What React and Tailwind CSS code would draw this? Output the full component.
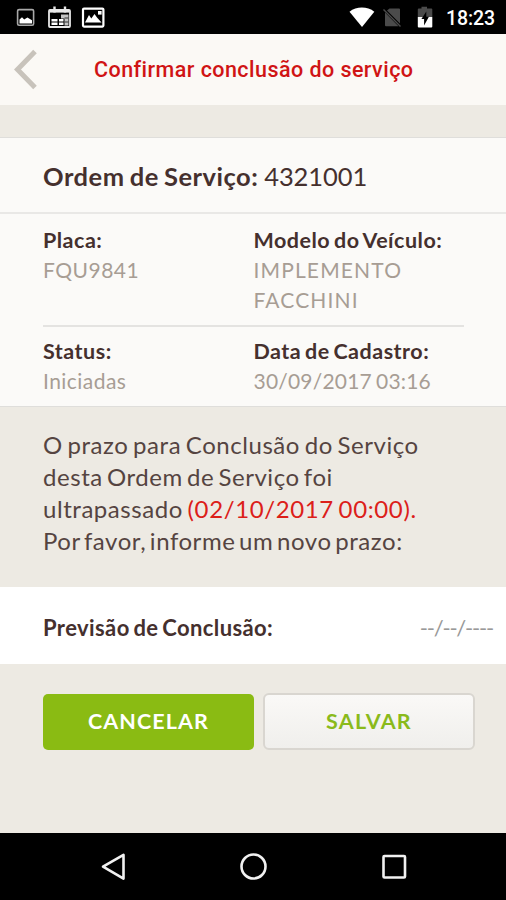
function StatusBar() {
  return (
    <div className="flex h-[34px] items-center bg-black">
      <svg width="506" height="34" viewBox="0 0 506 34" fill="none" aria-hidden="true">
        <rect x="17.6" y="9.6" width="16" height="15.6" rx="1.5" stroke="#a9a9a9" strokeWidth="1.6" />
        <path d="M19.5 23.5v-4l2.5-2.3 2.2 2.2 3.2-1.8 4.6 2.6v3.3z" fill="#fff" />

        <rect x="49" y="10" width="21" height="17" rx="1" stroke="#e8e8e8" strokeWidth="1.8" />
        <path d="M54.500 6.500v6M65 6.500v6" stroke="#e8e8e8" strokeWidth="2.400" />
        <path d="M49.500 11.500h20" stroke="#e8e8e8" strokeWidth="2.200" />
        <path d="M51.500 19h6v2.400h-6zM51.500 22.600h6v2.400h-6zM59 22.600h4.500v2.400H59zM59 19h4.500v2.400H59z" fill="#fff" />
        <path d="M61 14.500h7.500V25.500h-4v-7H61z" fill="#c4c4c4" />
        <path d="M64.500 18h4M64.500 22h4" stroke="#333" />

        <rect x="83" y="8.600" width="20.400" height="18" rx="1" stroke="#fff" strokeWidth="2.200" />
        <path d="M85 22.500l4-7.500 2.300 3.500 3.200-4.500 2.500 3.500 4.500 5z" fill="#fff" />
        <rect x="98" y="11" width="3.600" height="3.600" fill="#fff" />

        <path d="M349.500 11.700c7-5.500 17.800-5.500 24.800 0L362 27z" fill="#fff" />

        <path d="M389.500 8.500h9.500q1 0 1 1v14L387 10.500zM385 12.500l13.500 13.700h-12.500q-1 0-1-1z" fill="#4b4b4b" />
        <path d="M383.500 9.500l17 17" stroke="#4b4b4b" strokeWidth="1.500" />

        <path d="M417.800 17V9.500q0-1 1-1h2.700V6.800h5.500v1.700h4.300q1 0 1 1V17z" fill="#4b4b4b" />
        <path d="M417.800 17h14.500v9.500q0 1-1 1h-12.500q-1 0-1-1z" fill="#fff" />
        <path d="M426.300 11.500v5.300h2.600l-4.800 8.700v-6.500h-2.700z" fill="#000" />

        <text x="446" y="25" fill="#fff" fontFamily="Roboto, sans-serif" fontWeight="500" fontSize="19.500" textLength="49">
          18:23
        </text>
      </svg>
    </div>
  );
}

function Field({ label, value, valueClass }) {
  return (
    <div>
      <div className="text-[21.500px] leading-[30px] font-bold tracking-[0.500px] whitespace-nowrap text-[#45302e] [word-spacing:-2px]">
        {label}
      </div>
      <div className={`text-[21px] leading-[29.500px] whitespace-pre text-[#a79d94] ${valueClass}`}>{value}</div>
    </div>
  );
}

function NavBar() {
  return (
    <div className="flex h-[67px] items-start bg-black">
      <svg width="506" height="67" viewBox="0 833 506 67" fill="none" stroke="#f1f1f1" strokeWidth="2.600" aria-hidden="true">
        <path d="M103 866.700L123.500 854.800v23.800z" strokeLinejoin="round" />
        <circle cx="253.500" cy="866.500" r="12" />
        <rect x="383.500" y="856" width="21.500" height="21.500" rx="1" />
      </svg>
    </div>
  );
}

export default function App() {
  return (
    <div className="flex h-[900px] w-[506px] flex-col overflow-hidden bg-[#edeae3] font-['Lato','Open_Sans',sans-serif]">
      <StatusBar />

      <header className="flex h-[71px] items-center bg-[#fbf9f5] pl-[13px]">
        <svg width="26" height="42" viewBox="0 0 26 42" fill="none" aria-hidden="true">
          <path d="M22 2.500L4.500 20.500 22 38.500" stroke="#c8c3bb" strokeWidth="5" />
        </svg>
        <h1 className="ml-[55px] pt-px font-['Roboto',sans-serif] text-[21.500px] font-medium tracking-[0.450px] whitespace-nowrap text-[#d01414]">
          Confirmar conclusão do serviço
        </h1>
      </header>

      <section className="mt-[32px] h-[270px] border-y border-[#dfdedb] bg-[#fbfaf8]">
        <h2 className="flex h-[76px] items-center border-b-2 border-[#e9e8e6] pt-[3px] pl-[43px] text-[25.500px] tracking-[0.500px] whitespace-pre text-[#45302e] [word-spacing:-1.500px]">
          <span className="font-bold">Ordem de Serviço:</span>
          <span className="tracking-[-0.100px] [word-spacing:-0.500px]"> 4321001</span>
        </h2>
        <div className="ml-[43px] w-[421px]">
          <div className="grid h-[113px] grid-cols-2 border-b-2 border-[#e4e3e1] pt-[11px]">
            <Field label="Placa:" value="FQU9841" valueClass="tracking-[0.500px]" />
            <Field label="Modelo do Veículo:" value={"IMPLEMENTO\nFACCHINI"} valueClass="tracking-[1.150px]" />
          </div>
          <div className="grid grid-cols-2 pt-[9px]">
            <Field label="Status:" value="Iniciadas" valueClass="tracking-[0.450px]" />
            <Field label="Data de Cadastro:" value="30/09/2017 03:16" valueClass="tracking-[0.200px] [word-spacing:-1.500px]" />
          </div>
        </div>
      </section>

      <p className="h-[180px] pt-[21.500px] pl-[43px] text-[24px] leading-[32.300px] tracking-[0.550px] text-[#554441] [word-spacing:-2px]">
        <span className="block whitespace-nowrap">O prazo para Conclusão do Serviço</span>
        <span className="block whitespace-nowrap [word-spacing:-2.500px]">desta Ordem de Serviço foi</span>
        <span className="block whitespace-nowrap">
          ultrapassado <span className="tracking-[0.620px] text-[#dc2019]">(02/10/2017 00:00).</span>
        </span>
        <span className="block whitespace-nowrap [word-spacing:-3px]">Por favor, informe um novo prazo:</span>
      </p>

      <div className="flex h-[77px] items-center justify-between bg-white pt-1 pr-[13px] pl-[43px]">
        <span className="text-[22px] font-bold tracking-[0.400px] text-[#45302e] [word-spacing:-2px]">Previsão de Conclusão:</span>
        <span className="text-[22px] tracking-[-1.200px] text-[#999]">--/--/----</span>
      </div>

      <div className="flex flex-1 items-start gap-[9px] pt-[30px] pl-[43px]">
        <button className="h-[56px] w-[211px] rounded-[5px] bg-[#8abb13] pb-[2px] text-[21.500px] font-bold tracking-[1.100px] text-white">
          CANCELAR
        </button>
        <button className="-mt-px h-[57px] w-[212px] rounded-[6px] border-2 border-[#d9d6d0] bg-linear-to-b from-[#faf9f7] to-[#f0efec] text-[21.500px] font-bold tracking-[1.300px] text-[#8aba1b]">
          SALVAR
        </button>
      </div>

      <NavBar />
    </div>
  );
}
